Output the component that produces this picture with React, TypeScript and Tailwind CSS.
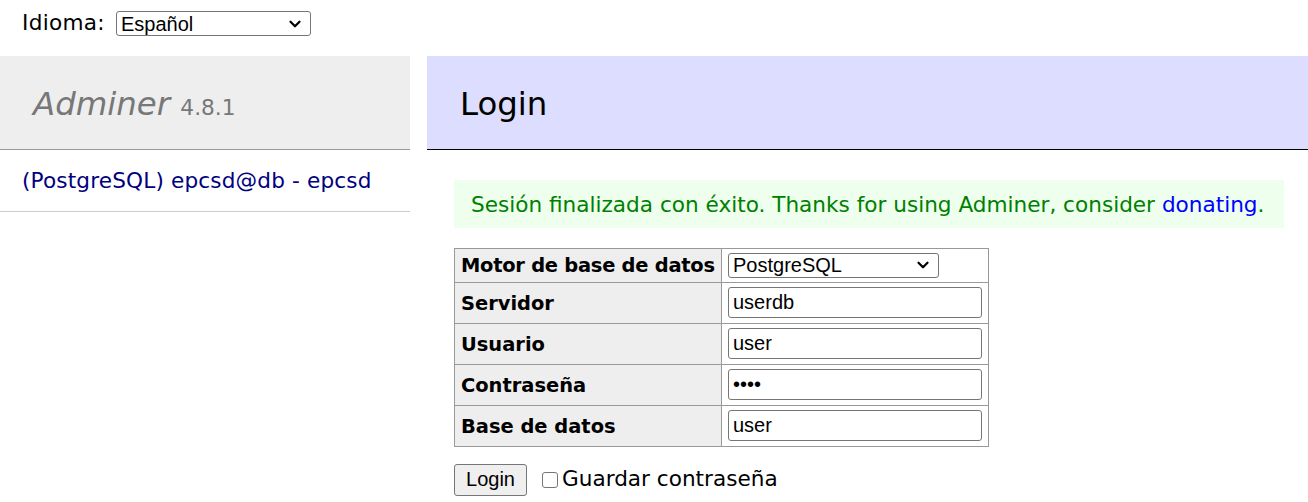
import { ChevronDown } from "lucide-react";

function FakeSelect({ value, className }: { value: string; className: string }) {
  return (
    <div
      className={`relative flex items-center rounded-[3px] border border-[#767676] bg-white pl-[4px] font-['Liberation_Sans',Arial,sans-serif] text-[20px] leading-none text-black ${className}`}
    >
      <span>{value}</span>
      <ChevronDown
        size={18}
        strokeWidth={3}
        className="absolute right-[6px] top-1/2 -translate-y-1/2 text-black"
      />
    </div>
  );
}

const rows = [
  { label: "Servidor", value: "userdb", type: "text" },
  { label: "Usuario", value: "user", type: "text" },
  { label: "Contraseña", value: "user", type: "password" },
  { label: "Base de datos", value: "user", type: "text" },
];

export default function App() {
  return (
    <div className="h-[502px] w-[1308px] overflow-hidden bg-white font-['DejaVu_Sans',Verdana,sans-serif] text-[21.6px] leading-[1.25] text-black">
      {/* idioma */}
      <div className="flex h-[56px] items-start pl-[22px] pt-[11px]">
        <div className="flex h-[25px] items-center">
          <span className="w-[94px] tracking-[0.3px]">Idioma:</span>
          <FakeSelect value="Español" className="h-[25px] w-[195px]" />
        </div>
      </div>

      <div className="flex">
        {/* menu */}
        <div className="w-[410px] shrink-0">
          <h1 className="h-[94px] border-b border-[#999] bg-[#eee] px-[33px] pt-[28px] text-[32.4px] leading-[40.5px] text-[#777]">
            <span className="italic">Adminer</span>{" "}
            <span className="text-[21.7px]">4.8.1</span>
          </h1>
          <div className="border-b border-[#ccc] px-[22px] py-[17px] leading-[27px] tracking-[0.15px] text-[#000080]">
            (PostgreSQL) epcsd@db - epcsd
          </div>
        </div>

        {/* content */}
        <div className="ml-[17px] flex-1">
          <h2 className="h-[94px] border-b border-black bg-[#ddf] px-[33px] pt-[28px] text-[32.4px] leading-[40.5px]">
            Login
          </h2>

          <div className="ml-[27px]">
            <div className="mt-[30px] w-[830px] bg-[#efe] px-[17px] py-[10.5px] leading-[27px] text-[#008000]">
              Sesión finalizada con éxito. Thanks for using Adminer, consider{" "}
              <span className="text-[#0000ff]">donating</span>.
            </div>

            <table className="mt-[19.5px] w-[535px] table-fixed border-collapse text-[19.44px]">
              <tbody>
                <tr className="h-[34px]">
                  <th className="w-[267px] whitespace-nowrap border border-[#999] bg-[#eee] px-[6px] pt-[2px] text-left font-bold tracking-[-0.25px]">
                    Motor de base de datos
                  </th>
                  <td className="border border-[#999] px-[6px]">
                    <FakeSelect value="PostgreSQL" className="h-[25px] w-[211px]" />
                  </td>
                </tr>
                {rows.map((r) => (
                  <tr key={r.label} className="h-[41px]">
                    <th className="whitespace-nowrap border border-[#999] bg-[#eee] px-[6px] pt-[3px] text-left font-bold">
                      {r.label}
                    </th>
                    <td className="border border-[#999] px-[6px]">
                      <input
                        type={r.type}
                        defaultValue={r.value}
                        readOnly
                        className="block h-[31px] w-[254px] rounded-[3px] border border-[#767676] bg-white px-[4px] font-['Liberation_Sans',Arial,sans-serif] text-[20px] text-black outline-none"
                      />
                    </td>
                  </tr>
                ))}
              </tbody>
            </table>

            <div className="mt-[17px] flex items-center">
              <button className="h-[32px] w-[73px] rounded-[3px] border border-[#767676] bg-[#efefef] font-['Liberation_Sans',Arial,sans-serif] text-[20px] text-black">
                Login
              </button>
              <span className="ml-[15px] h-[16px] w-[16px] rounded-[3px] border border-[#767676] bg-white" />
              <span className="ml-[4px]">Guardar contraseña</span>
            </div>
          </div>
        </div>
      </div>
    </div>
  );
}
